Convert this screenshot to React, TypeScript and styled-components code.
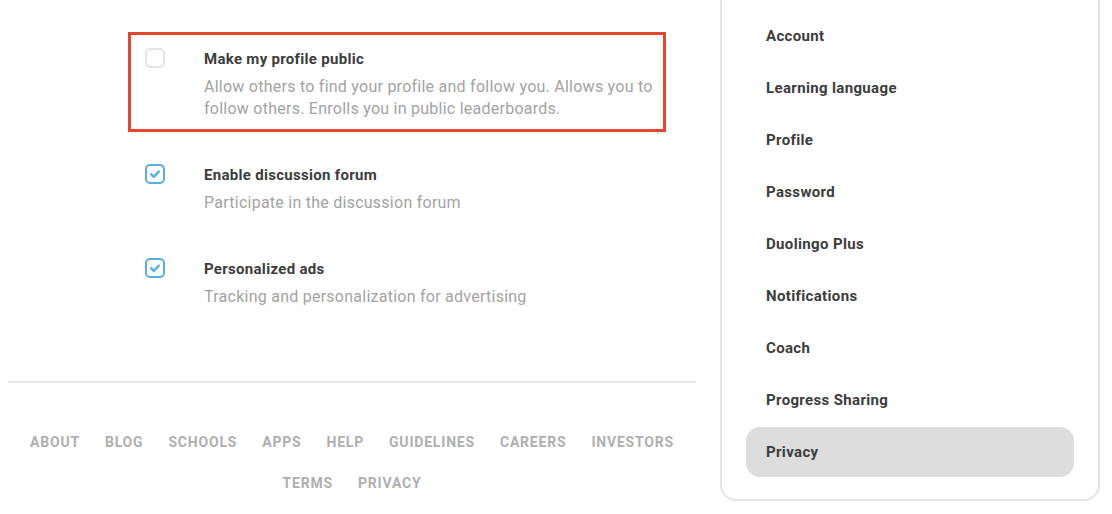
import React from "react";
import styled, { createGlobalStyle } from "styled-components";

const GlobalStyle = createGlobalStyle`
  html, body { margin: 0; padding: 0; background: #ffffff; }
  body { font-family: Roboto, "Noto Sans", sans-serif; -webkit-font-smoothing: antialiased; }
`;

const Page = styled.div`
  display: flex;
  align-items: flex-start;
  gap: 24px;
  padding-left: 8px;
  height: 514px;
  overflow: hidden;
`;

const Main = styled.main`
  width: 688px;
  display: flex;
  flex-direction: column;
`;

const SettingsList = styled.div`
  display: flex;
  flex-direction: column;
  gap: 16px;
  padding: 32px 0 0 120px;
`;

const SettingRow = styled.label<{ $outlined?: boolean }>`
  width: 538px;
  box-sizing: border-box;
  display: flex;
  align-items: flex-start;
  gap: 39px;
  padding: 13px 10px 9px 14px;
  border: 3px solid ${(p) => (p.$outlined ? "#e6452f" : "transparent")};
`;

const Box = styled.span<{ $checked?: boolean }>`
  flex: none;
  width: 20px;
  height: 20px;
  box-sizing: border-box;
  border: 2px solid ${(p) => (p.$checked ? "#5aaee6" : "#e5e5e5")};
  border-radius: 5px;
  display: flex;
  align-items: center;
  justify-content: center;
`;

const TextCol = styled.div`
  flex: 1;
  display: flex;
  flex-direction: column;
  gap: 6px;
`;

const Title = styled.div`
  font-size: 15px;
  font-weight: 700;
  line-height: 22px;
  letter-spacing: 0.3px;
  color: #3c3c3c;
`;

const Desc = styled.div`
  font-size: 16px;
  line-height: 22px;
  letter-spacing: 0.25px;
  color: #a3a3a3;
`;

const Divider = styled.hr`
  margin: 61px 0 0;
  border: none;
  height: 2px;
  background: #e5e5e5;
`;

const Footer = styled.nav`
  display: flex;
  flex-wrap: wrap;
  justify-content: center;
  column-gap: 25px;
  row-gap: 21px;
  padding: 49px 20px 0;
`;

const FooterLink = styled.a`
  font-size: 14px;
  font-weight: 700;
  line-height: 20px;
  letter-spacing: 0.8px;
  text-transform: uppercase;
  color: #afafaf;
  text-decoration: none;
`;

const Sidebar = styled.aside`
  width: 380px;
  box-sizing: border-box;
  border: 2px solid #e5e5e5;
  border-top: none;
  border-radius: 0 0 16px 16px;
  padding: 11px 24px 22px;
  display: flex;
  flex-direction: column;
  gap: 2px;
`;

const NavItem = styled.a<{ $active?: boolean }>`
  height: 50px;
  display: flex;
  align-items: center;
  padding: 0 20px;
  border-radius: 14px;
  font-size: 15px;
  font-weight: 700;
  letter-spacing: 0.35px;
  color: #3c3c3c;
  text-decoration: none;
  background: ${(p) => (p.$active ? "#dddddd" : "transparent")};
`;

const Check = () => (
  <svg width="12" height="10" viewBox="0 0 12 10" fill="none">
    <path d="M2.2 5.2 L4.8 7.8 L9.8 2.6" stroke="#5aaee6" strokeWidth="2.4" strokeLinecap="round" strokeLinejoin="round" />
  </svg>
);

const settings = [
  {
    title: "Make my profile public",
    desc: "Allow others to find your profile and follow you. Allows you to follow others. Enrolls you in public leaderboards.",
    checked: false,
    outlined: true,
  },
  { title: "Enable discussion forum", desc: "Participate in the discussion forum", checked: true },
  { title: "Personalized ads", desc: "Tracking and personalization for advertising", checked: true },
];

const footerLinks = ["About", "Blog", "Schools", "Apps", "Help", "Guidelines", "Careers", "Investors", "Terms", "Privacy"];

const navItems = [
  "Account",
  "Learning language",
  "Profile",
  "Password",
  "Duolingo Plus",
  "Notifications",
  "Coach",
  "Progress Sharing",
  "Privacy",
];

export default function App() {
  return (
    <>
      <GlobalStyle />
      <Page>
        <Main>
          <SettingsList>
            {settings.map((s) => (
              <SettingRow key={s.title} $outlined={s.outlined}>
                <Box $checked={s.checked}>{s.checked && <Check />}</Box>
                <TextCol>
                  <Title>{s.title}</Title>
                  <Desc>{s.desc}</Desc>
                </TextCol>
              </SettingRow>
            ))}
          </SettingsList>
          <Divider />
          <Footer>
            {footerLinks.map((l) => (
              <FooterLink key={l} href="#">
                {l}
              </FooterLink>
            ))}
          </Footer>
        </Main>
        <Sidebar>
          {navItems.map((n) => (
            <NavItem key={n} href="#" $active={n === "Privacy"}>
              {n}
            </NavItem>
          ))}
        </Sidebar>
      </Page>
    </>
  );
}
